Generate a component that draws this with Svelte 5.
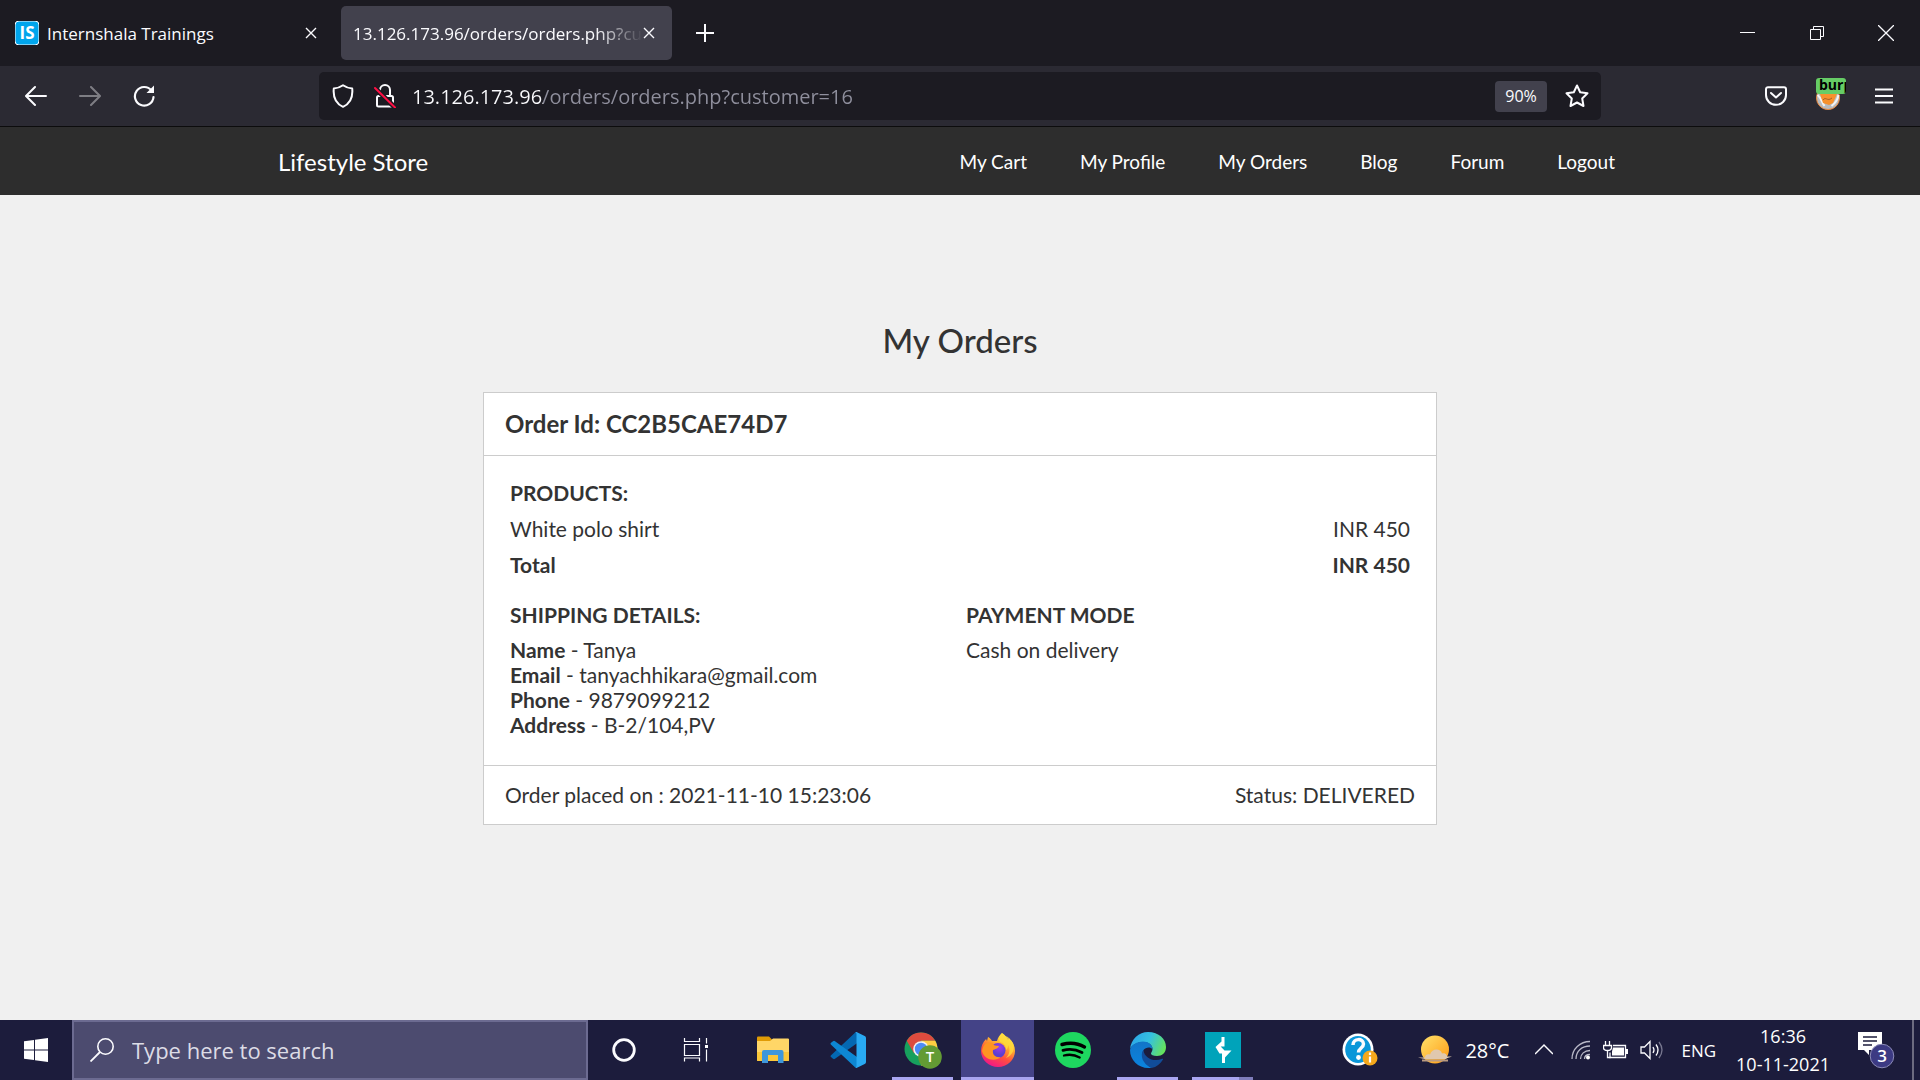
<script>
  const links = ['My Cart', 'My Profile', 'My Orders', 'Blog', 'Forum', 'Logout'];

  const details = [
    ['Name', 'Tanya'],
    ['Email', 'tanyachhikara@gmail.com'],
    ['Phone', '9879099212'],
    ['Address', 'B-2/104,PV']
  ];
</script>

<div class="screen">
  <header class="tabs">
    <div class="tab">
      <svg class="favicon" width="24" height="24" viewBox="0 0 24 24" aria-hidden="true">
        <rect width="24" height="24" rx="4" fill="#00a5ec" />
        <text x="12" y="18" text-anchor="middle" class="favtext">IS</text>
      </svg>
      <button class="title">Internshala Trainings</button>
      <button class="x" aria-label="Close tab">
        <svg width="12" height="12" viewBox="0 0 12 12"><path d="M1 1l10 10M11 1L1 11" /></svg>
      </button>
    </div>
    <div class="tab active">
      <button class="title fade">13.126.173.96/orders/orders.php?customer=16</button>
      <button class="x" aria-label="Close tab">
        <svg width="12" height="12" viewBox="0 0 12 12"><path d="M1 1l10 10M11 1L1 11" /></svg>
      </button>
    </div>
    <button class="plus" aria-label="New tab">
      <svg width="18" height="18" viewBox="0 0 18 18"><path d="M9 0v18M0 9h18" stroke-width="2" /></svg>
    </button>
    <div class="window">
      <button aria-label="Minimize">
        <svg width="16" height="16" viewBox="0 0 16 16"><path d="M0 7.500h15" stroke-width="1" /></svg>
      </button>
      <button aria-label="Restore">
        <svg width="16" height="16" viewBox="0 0 16 16"><path d="M1.500 4.500h10v10h-10zM4.500 4.500v-3h10v10h-3" stroke-width="1" /></svg>
      </button>
      <button aria-label="Close window">
        <svg width="16" height="16" viewBox="0 0 16 16"><path d="M0 0l16 16M16 0L0 16" stroke-width="1.300" /></svg>
      </button>
    </div>
  </header>

  <div class="toolbar">
    <div class="nav-buttons">
      <button aria-label="Back">
        <svg width="22" height="22" viewBox="0 0 22 22"><path d="M21 11H1.500M10 2l-9 9 9 9" stroke-width="2" stroke-linecap="round" stroke-linejoin="round" /></svg>
      </button>
      <button class="dim" aria-label="Forward">
        <svg width="22" height="22" viewBox="0 0 22 22"><path d="M1 11h19.500M12 2l9 9-9 9" stroke-width="2" stroke-linecap="round" stroke-linejoin="round" /></svg>
      </button>
      <button aria-label="Reload">
        <svg width="22" height="24" viewBox="0 0 22 24">
          <path d="M18.500 6.500A9.300 9.300 0 1 0 20.500 13" stroke-width="2.200" stroke-linecap="round" />
          <path d="M21 1.500v7.500h-7.500z" fill="#fbfbfe" stroke="none" />
        </svg>
      </button>
    </div>
    <div class="urlbar">
      <svg width="22" height="24" viewBox="0 0 22 24" aria-hidden="true">
        <path d="M11 1.200C8 3.300 5 4.200 1.800 4.500 1 12.500 3.500 19.500 11 22.800 18.500 19.500 21 12.500 20.200 4.500 17 4.200 14 3.300 11 1.200z" stroke-width="2" stroke-linejoin="round" />
      </svg>
      <svg width="22" height="24" viewBox="0 0 22 24" aria-hidden="true">
        <path d="M6 8V6a5 5 0 0 1 10 0v5" stroke-width="2" stroke-linecap="round" />
        <rect x="3" y="12" width="16" height="10.500" rx="1.500" stroke-width="2" />
        <path d="M1 4l20 19.500" stroke="#1c1b22" stroke-width="5" />
        <path d="M1 4l20 19.500" stroke="#ff0f44" stroke-width="2" stroke-linecap="round" />
      </svg>
      <input class="url" aria-label="Address" value="13.126.173.96/orders/orders.php?customer=16" />
      <button class="zoom">90%</button>
      <button class="star" aria-label="Bookmark this page">
        <svg width="24" height="24" viewBox="0 0 24 24">
          <path d="M12 1.500l3.200 6.800 7.300 1-5.300 5.200 1.300 7.500L12 18.500l-6.500 3.500 1.300-7.500L1.500 9.300l7.300-1z" stroke-width="2" stroke-linejoin="round" />
        </svg>
      </button>
    </div>
    <div class="actions">
      <button aria-label="Save to Pocket">
        <svg width="22" height="20" viewBox="0 0 22 20">
          <path d="M3 1.200h16a2 2 0 0 1 2 2V9a10 9.800 0 0 1-20 0V3.200a2 2 0 0 1 2-2z" stroke-width="2" />
          <path d="M6 7l5 4.500L16 7" stroke-width="2" stroke-linecap="round" stroke-linejoin="round" />
        </svg>
      </button>
      <button class="burp" aria-label="Proxy extension">
        <svg width="24" height="24" viewBox="0 0 24 24">
          <circle cx="12" cy="12" r="11.500" fill="#b9bcc0" stroke="#f08a3c" />
          <path d="M1.500 9c4 3 4 7 7 11M22.500 9c-1 5-3 8-7 11" stroke="#f4f4f4" stroke-width="2" />
          <path d="M4 8h17l-4 9-4 2-6-2z" fill="#f7912d" stroke="none" />
          <path d="M7 14c3-4 4 2 9-2" stroke="#a5602a" />
        </svg>
        <span class="chip">burp</span>
      </button>
      <button aria-label="Menu">
        <svg width="18" height="16" viewBox="0 0 18 16"><path d="M0 1.500h18M0 8h18M0 14.500h18" stroke-width="2" /></svg>
      </button>
    </div>
  </div>

  <nav class="site">
    <div class="container">
      <a class="brand" href="#home">Lifestyle Store</a>
      <div class="links">
        {#each links as link}
          <a href="#{link.toLowerCase().replace(' ', '-')}">{link}</a>
        {/each}
      </div>
    </div>
  </nav>

  <main>
    <h1>My Orders</h1>
    <section class="card">
      <h2>Order Id: CC2B5CAE74D7</h2>
      <div class="body">
        <table>
          <thead><tr><th colspan="2">PRODUCTS:</th></tr></thead>
          <tbody><tr><td>White polo shirt</td><td>INR 450</td></tr></tbody>
          <tfoot><tr><td>Total</td><td>INR 450</td></tr></tfoot>
        </table>
        <div class="columns">
          <div>
            <h3>SHIPPING DETAILS:</h3>
            {#each details as [name, value]}
              <p><b>{name}</b> - {value}</p>
            {/each}
          </div>
          <div>
            <h3>PAYMENT MODE</h3>
            <p>Cash on delivery</p>
          </div>
        </div>
      </div>
      <footer>
        <span>Order placed on : 2021-11-10 15:23:06</span>
        <span>Status: DELIVERED</span>
      </footer>
    </section>
  </main>

  <div class="taskbar">
    <button class="start" aria-label="Start">
      <svg width="24" height="24" viewBox="0 0 24 24"><path d="M0 3.300l10-1.400v9.500H0zM11 1.700L24 0v11.400H11zM0 12.500h10V22L0 20.700zM11 12.500h13V24l-13-1.800z" fill="#fff" stroke="none" /></svg>
    </button>
    <label class="search">
      <svg width="24" height="24" viewBox="0 0 24 24" aria-hidden="true"><circle cx="15.500" cy="8.500" r="7.700" stroke-width="1.600" /><path d="M10 14L.500 23.500" stroke-width="1.800" /></svg>
      <input aria-label="Search" placeholder="Type here to search" />
    </label>
    <button class="sys" aria-label="Cortana">
      <svg width="24" height="24" viewBox="0 0 24 24"><circle cx="12" cy="12" r="10.300" stroke-width="2.800" /></svg>
    </button>
    <button class="sys" aria-label="Task view">
      <svg width="26" height="24" viewBox="0 0 26 24">
        <path d="M1.500 0v3.500h15V0M1.500 6.500h15v11h-15zM1.500 23.500V20h15v3.500M23.500 0v5.500M23.500 11.500v12" stroke-width="1.200" />
        <path d="M22 7h3v3h-3z" fill="#fff" stroke="none" />
      </svg>
    </button>
    <div class="apps">
      <button aria-label="File Explorer">
        <svg width="32" height="28" viewBox="0 0 32 28">
          <path d="M0 1.500Q0 .500 1 .500h11l3 3-3 4H0z" fill="#e09b05" stroke="none" />
          <path d="M0 5h13l3-2.500h15q1 0 1 1V24q0 1-1 1H1q-1 0-1-1z" fill="#ffd667" stroke="none" />
          <path d="M0 16h32v8q0 1-1 1H1q-1 0-1-1z" fill="#fbc73a" stroke="none" />
          <path d="M5 27V16q0-2 2-2h17.500q2 0 2 2v11H21v-8H11v8z" fill="#3e97dc" stroke="none" />
        </svg>
      </button>
      <button aria-label="Visual Studio Code">
        <svg width="36" height="36" viewBox="0 0 36 36">
          <path d="M.800 23.500L25 .800l2-.500v11L5 26.800q-1 .800-2 0l-2-1.800q-1-.700-.2-1.500z" fill="#0468b2" stroke="none" />
          <path d="M.800 12.500q-.800-.900.200-1.700L3 9.200q1-.800 2 0L27 25v10.700l-2-.500z" fill="#0d87d3" stroke="none" />
          <path d="M27 .200L34.700 4q1.300.600 1.300 2v24q0 1.400-1.300 2L27 35.800q-1.200.400-2-.700 1.500.300 1.500-1V1.900q0-1.300-1.500-1 .8-1.100 2-.7z" fill="#29aaf3" stroke="none" />
        </svg>
      </button>
      <button class="open" aria-label="Chrome">
        <svg width="38" height="38" viewBox="0 0 38 38">
          <circle cx="17" cy="18" r="16.500" fill="#17a05d" stroke="none" />
          <path d="M2.700 9.800A16.500 16.500 0 0 1 31.300 9.800H17L9.900 22z" fill="#dd4b3e" stroke="none" />
          <path d="M31.300 9.800A16.500 16.500 0 0 1 17 34.500L24.100 22 17 9.800z" fill="#ffcd42" stroke="none" />
          <circle cx="17" cy="18" r="7.800" fill="#f1f1f1" stroke="none" />
          <circle cx="17" cy="18" r="6.200" fill="#4c8bf5" stroke="none" />
          <circle cx="26" cy="26" r="11.800" fill="#639b34" stroke="none" />
          <text x="26" y="31" text-anchor="middle" class="avatar">T</text>
        </svg>
      </button>
      <button class="open current" aria-label="Firefox">
        <svg width="36" height="36" viewBox="0 0 36 36">
          <defs>
            <linearGradient id="fox" x1=".800" y1="0" x2=".300" y2="1">
              <stop offset="0" stop-color="#fff44f" /><stop offset=".350" stop-color="#ffb02e" />
              <stop offset=".650" stop-color="#ff4f3f" /><stop offset="1" stop-color="#f0148c" />
            </linearGradient>
            <radialGradient id="globe" cx=".600" cy=".300"><stop offset="0" stop-color="#a13be8" /><stop offset="1" stop-color="#5b3fd0" /></radialGradient>
          </defs>
          <path d="M22 1c3 2 5 4 6 7l1-2c4 4 6 8 6 13a17 16 0 0 1-34 0c0-5 2-9 5-12l1 2 1-4c2 1 3 2 4 4h5c1-4 3-6 5-8z" fill="url(#fox)" stroke="none" />
          <circle cx="18" cy="18.500" r="7.500" fill="url(#globe)" stroke="none" />
          <path d="M2 19C3 12 7 9 12 11c1 2 3 3 7 3-1 3-4 3-6 4-1 5 3 8 8 7-6 5-17 3-19-6z" fill="#ff9422" stroke="none" />
          <path d="M22 1c-3 3-4 6-2 9 4 1 6 4 6 8 2-2 2-3 2-5 3 5 1 10-2 13 7-3 9-9 7-15-2-3-4-4-5-6-3-1-5-2-6-4z" fill="#ffdc3c" opacity=".800" stroke="none" />
        </svg>
      </button>
      <button aria-label="Spotify">
        <svg width="36" height="36" viewBox="0 0 36 36">
          <circle cx="18" cy="18" r="18" fill="#1ed760" stroke="none" />
          <path d="M7 12.500c7-2 16-1.300 22.500 2.500" stroke="#000" stroke-width="3.400" stroke-linecap="round" />
          <path d="M8 18.300c6-1.700 13-1 19 2.300" stroke="#000" stroke-width="2.800" stroke-linecap="round" />
          <path d="M9 23.500c5-1.300 11-.700 15.700 2" stroke="#000" stroke-width="2.300" stroke-linecap="round" />
        </svg>
      </button>
      <button class="open" aria-label="Edge">
        <svg width="36" height="36" viewBox="0 0 36 36">
          <defs>
            <linearGradient id="edge-top" x1="0" y1=".300" x2="1" y2=".600"><stop offset="0" stop-color="#2ba5e8" /><stop offset=".500" stop-color="#35c1e0" /><stop offset="1" stop-color="#66e35a" /></linearGradient>
            <linearGradient id="edge-low" x1="0" y1="0" x2="0" y2="1"><stop offset="0" stop-color="#1275c8" /><stop offset="1" stop-color="#0a84e0" /></linearGradient>
          </defs>
          <path d="M0 17C1 7 9 0 18 0c11 0 18 7 18 15 0 6-4 9-9 9-4 0-6-1-6-2.500 0-1 1.500-2 1.500-4.500 0-4-4-7-9-7C7 10 2 13 0 17z" fill="url(#edge-top)" stroke="none" />
          <path d="M0 18c1-5 7-8.500 13-8.500 5 0 9.500 3 9.500 7.500-2-2.500-7-2-9 1-3 5 1 13 8 18-1 .100-2 .100-3 0C8 36 0 28 0 18z" fill="url(#edge-low)" stroke="none" />
          <path d="M13.500 18c-4 5-1 14 8 18 5-1 9-4 11.500-8.500.300-.700-.300-1-.9-.7C24 30.500 14 26 13.500 18z" fill="#114c99" stroke="none" />
        </svg>
      </button>
      <button class="open many" aria-label="Burp Suite">
        <svg width="36" height="36" viewBox="0 0 36 36">
          <path d="M0 0h36v36H0z" fill="#00a3ba" stroke="none" />
          <path d="M16.500 5h3v9.500h-3.800l3.800 4h7L20 25.500V31h-3v-9.500h-2.500L10.500 15l6-5.500z" fill="#fff" stroke="none" />
        </svg>
      </button>
    </div>
    <div class="tray">
      <svg width="36" height="34" viewBox="0 0 36 34" aria-hidden="true">
        <ellipse cx="16" cy="16.500" rx="15.500" ry="16" fill="#fff" stroke="none" />
        <ellipse cx="16" cy="16.500" rx="12.800" ry="13.500" fill="#0a97d9" stroke="none" />
        <path d="M11 12c0-7 10.500-7 10.500-1 0 4-5 4-5 8.500" stroke-width="3.500" />
        <circle cx="16.500" cy="24.500" r="2.400" fill="#fff" stroke="none" />
        <circle cx="28" cy="25" r="7.500" fill="#f5a81c" stroke="none" />
        <path d="M28 23.500v6M28 19.500v2.500" stroke-width="2.200" />
      </svg>
      <button class="weather">
        <svg width="34" height="30" viewBox="0 0 34 30" aria-hidden="true">
          <defs><linearGradient id="sun" x1="0" y1="0" x2="1" y2="1"><stop offset="0" stop-color="#ffe26b" /><stop offset="1" stop-color="#ff9a14" /></linearGradient></defs>
          <circle cx="17" cy="14.500" r="14" fill="url(#sun)" stroke="none" />
          <path d="M0 22.500h7c0-3 3-4 5-3 2-7 11-6 12-1 4-1 5 2 5 3h5c-3 1-5 1.500-6 2.500H12C8 24 4 24 0 22.500z" fill="#e0c8ae" stroke="none" />
          <path d="M4 25.500h26" stroke="#b99a80" stroke-width="2" />
        </svg>
        28°C
      </button>
      <div class="status">
        <svg width="18" height="18" viewBox="0 0 18 18" aria-hidden="true"><path d="M0 13l9-9 9 9" stroke-width="1.500" /></svg>
        <svg width="20" height="20" viewBox="0 0 20 20" aria-hidden="true">
          <path d="M1 19C1 9 9 1.500 19 1.500M5 19C5 11 11 6 19 6M9.500 19c0-5 4-8.500 9.500-8.500M13.500 19c0-2.500 2-4.500 5.500-4.500" stroke="#b9b9c8" stroke-width="1.300" />
          <circle cx="17" cy="17.500" r="2" fill="#fff" stroke="none" />
        </svg>
        <svg width="25" height="18" viewBox="0 0 25 18" aria-hidden="true">
          <path d="M2.500 0v4M6.500 0v4M.500 4.500h8v2q0 3-4 3t-4-3zM4.500 10v6.500h3" stroke-width="1.300" />
          <path d="M10 4.500h12.500v12H7v-5" stroke-width="1.300" /><path d="M10 6.500h11v8H9v-4zM23 8h2v5h-2z" fill="#fff" stroke="none" />
        </svg>
        <svg width="24" height="20" viewBox="0 0 24 20" aria-hidden="true">
          <path d="M1 7h3.500L10 1.500v17L4.500 13H1z" stroke-width="1.300" />
          <path d="M13 7q2 3 0 6" stroke-width="1.300" /><path d="M16 4.500q4 5.500 0 11" stroke-width="1.300" />
          <path d="M19 2q6 8 0 16" stroke="#77778f" stroke-width="1.300" />
        </svg>
      </div>
      <span class="lang">ENG</span>
      <div class="clock"><span>16:36</span><span>10-11-2021</span></div>
      <button class="notes" aria-label="Notifications">
        <svg width="38" height="38" viewBox="0 0 38 38">
          <path d="M0 1h24v18H11v5l-5-5H0z" fill="#fff" stroke="none" />
          <path d="M5 6h14M5 10h14M5 14h9" stroke="#1c1c3c" stroke-width="1.500" />
          <circle cx="24" cy="25" r="11.800" fill="#3c3a83" stroke="#8c8bb8" />
          <text x="24" y="31" text-anchor="middle" class="count">3</text>
        </svg>
      </button>
      <div class="peek"></div>
    </div>
  </div>
</div>

<style>
  :global(body) {
    margin: 0;
  }
  .screen {
    display: flex;
    flex-direction: column;
    min-height: 100vh;
    background: #f0f0f0;
    color: #333;
    font-family: 'Open Sans', 'Noto Sans', sans-serif;
  }
  button,
  input {
    padding: 0;
    border: 0;
    background: none;
    color: inherit;
    font: inherit;
  }
  button {
    display: flex;
    align-items: center;
    justify-content: center;
  }
  svg {
    flex: none;
    fill: none;
    stroke: #fbfbfe;
  }
  svg text {
    stroke: none;
    fill: #fff;
  }

  /* browser chrome */
  .tabs {
    display: flex;
    align-items: center;
    height: 66px;
    background: #1c1b22;
    color: #fbfbfe;
    font-size: 17px;
  }
  .tab {
    display: flex;
    align-items: center;
    box-sizing: border-box;
    width: 331px;
    height: 54px;
    padding: 0 17px 0 12px;
    border-radius: 5px;
  }
  .tab:first-child {
    width: 341px;
    padding: 0 24px 0 15px;
  }
  .tab.active {
    background: #42414d;
  }
  .favicon {
    margin-right: 8px;
  }
  .favtext {
    font: 700 17px 'Open Sans', sans-serif;
  }
  .title {
    flex: 1;
    min-width: 0;
    justify-content: flex-start;
    overflow: hidden;
    white-space: nowrap;
  }
  .fade {
    mask-image: linear-gradient(to left, transparent, #000 48px);
  }
  .x svg {
    stroke-width: 1.4px;
  }
  .plus {
    width: 65px;
    height: 54px;
  }
  .window {
    display: flex;
    margin-left: auto;
  }
  .window button {
    width: 69px;
    height: 66px;
  }
  .toolbar {
    display: grid;
    grid-template-columns: 319px minmax(0, 1fr) 319px;
    align-items: center;
    height: 60px;
    border-bottom: 1px solid #0c0c0d;
    background: #2b2a33;
    color: #fbfbfe;
  }
  .nav-buttons {
    display: flex;
    align-items: center;
    gap: 32px;
    padding-left: 25px;
  }
  .dim {
    opacity: 0.4;
  }
  .urlbar {
    display: flex;
    align-items: center;
    gap: 20px;
    height: 48px;
    padding: 0 12px 0 13px;
    border-radius: 5px;
    background: #1c1b22;
  }
  .url {
    flex: 1;
    min-width: 0;
    height: 32px;
    margin-left: -4px;
    background: linear-gradient(to right, #fbfbfe 131px, #8f8f9d 131px);
    background-clip: text;
    -webkit-text-fill-color: transparent;
    font-size: 20px;
  }
  .zoom {
    width: 52px;
    height: 31px;
    margin-right: -2px;
    border-radius: 4px;
    background: #42414d;
    font-size: 16px;
  }
  .actions {
    display: flex;
    align-items: center;
    justify-content: flex-end;
    gap: 29px;
    padding-right: 27px;
  }
  .burp {
    position: relative;
    width: 30px;
    height: 28px;
    align-items: flex-end;
    justify-content: flex-start;
  }
  .chip {
    position: absolute;
    top: -4px;
    left: 0;
    width: 27px;
    height: 16px;
    padding-left: 3px;
    overflow: hidden;
    border-radius: 3px;
    background: #66cc66;
    color: #000;
    font-size: 14px;
    font-weight: 700;
    line-height: 14px;
    text-align: left;
  }

  /* store page */
  .site,
  main {
    font-family: Lato, sans-serif;
  }
  .site {
    background: #2d2d2d;
  }
  .site a {
    color: #fff;
    text-decoration: none;
  }
  .container {
    display: flex;
    align-items: center;
    justify-content: space-between;
    max-width: 1364px;
    height: 68px;
    margin: 0 auto;
  }
  .brand {
    font-size: 24px;
  }
  .links {
    display: flex;
    gap: 53px;
    padding-right: 27px;
    font-size: 19px;
  }
  main {
    flex: 1;
    padding: 125px 24px 32px;
    font-size: 21px;
    line-height: 25px;
  }
  h1,
  h2,
  h3,
  p {
    margin: 0;
  }
  h1 {
    margin-bottom: 32px;
    font-size: 33px;
    font-weight: 500;
    line-height: 40px;
    text-align: center;
  }
  .card {
    max-width: 952px;
    margin: 0 auto;
    border: 1px solid #ccc;
    background: #fff;
  }
  h2 {
    padding: 0 21px;
    font-size: 24px;
    font-weight: 700;
    line-height: 62px;
  }
  .body {
    padding: 19px 26px 28px;
    border: 1px solid #ccc;
    border-width: 1px 0;
  }
  table {
    width: 100%;
    border-collapse: collapse;
    line-height: 36px;
  }
  th,
  td {
    padding: 0;
    text-align: left;
  }
  th,
  h3 {
    font-size: 21px;
    font-weight: 700;
  }
  td:last-child {
    text-align: right;
  }
  tfoot,
  b {
    font-weight: 700;
  }
  .columns {
    display: grid;
    grid-template-columns: 1fr 1fr;
    gap: 12px;
    margin-top: 14px;
  }
  h3 {
    margin-bottom: 4px;
    line-height: 36px;
  }
  footer {
    display: flex;
    justify-content: space-between;
    padding: 0 21px;
    line-height: 58px;
  }

  /* desktop taskbar */
  .taskbar {
    display: flex;
    height: 60px;
    background: #1c1c3c;
    color: #fff;
  }
  .start,
  .sys {
    width: 72px;
  }
  .search {
    display: flex;
    align-items: center;
    gap: 18px;
    box-sizing: border-box;
    width: 516px;
    padding: 0 16px;
    border: 2px solid #6c6b91;
    background: #4c4b6f;
  }
  .search input {
    flex: 1;
    min-width: 0;
    font-size: 22px;
  }
  .search input::placeholder {
    color: #dcdce6;
    opacity: 1;
  }
  .apps {
    display: flex;
    gap: 2px;
    margin-left: 4px;
  }
  .apps button {
    width: 73px;
  }
  .open {
    background: linear-gradient(#a9a5f0, #a9a5f0) center bottom / 61px 3px no-repeat;
  }
  .current {
    background-color: #444387;
    background-size: 100% 3px;
  }
  .many {
    background-image: linear-gradient(to right, #a9a5f0 47px, #7f7dbb 47px);
  }
  .avatar {
    font: 600 15px 'Open Sans', sans-serif;
  }
  .tray {
    display: flex;
    align-items: center;
    margin-left: auto;
    font-size: 18px;
  }
  .weather {
    gap: 13px;
    margin: 0 26px 0 40px;
    font-size: 20px;
  }
  .status {
    display: flex;
    align-items: center;
    gap: 12px;
  }
  .status svg:first-child {
    margin-right: 6px;
  }
  .lang {
    margin: 0 20px 0 17px;
    font-size: 17px;
  }
  .clock {
    display: flex;
    flex-direction: column;
    align-items: center;
    font-size: 18px;
    line-height: 28px;
  }
  .notes {
    margin: 0 16px 0 28px;
  }
  .count {
    font: 600 17px 'Open Sans', sans-serif;
  }
  .peek {
    align-self: stretch;
    width: 6px;
    border-left: 2px solid #6c6b80;
  }
</style>
